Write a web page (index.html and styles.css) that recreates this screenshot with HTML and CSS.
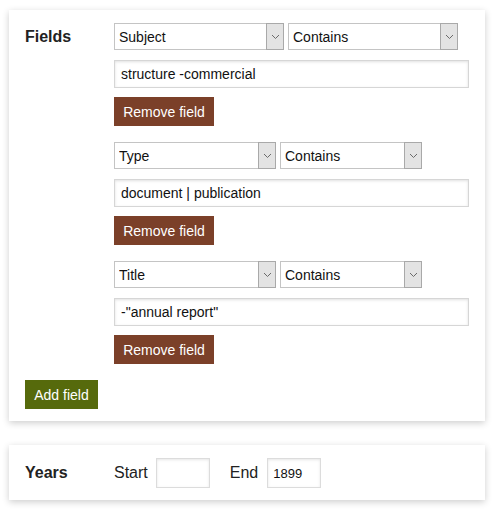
FILE: index.html
```html
<!DOCTYPE html>
<html>
<head>
<meta charset="utf-8">
<link rel="stylesheet" href="styles.css">
</head>
<body>
<div class="page">
  <section class="card fields-card">
    <div class="label">Fields</div>
    <div class="field-list">
      <div class="field">
        <div class="select-row">
          <span class="sel sel-wide"><select><option>Subject</option></select><span class="arrow"><svg width="9" height="6" viewBox="0 0 9 6"><path d="M1 1 L4.5 4.5 L8 1" fill="none" stroke="#6a6a6a" stroke-width="1"/></svg></span></span>
          <span class="sel sel-wide"><select><option>Contains</option></select><span class="arrow"><svg width="9" height="6" viewBox="0 0 9 6"><path d="M1 1 L4.5 4.5 L8 1" fill="none" stroke="#6a6a6a" stroke-width="1"/></svg></span></span>
        </div>
        <input class="text" type="text" value="structure -commercial">
        <button class="btn remove">Remove field</button>
      </div>
      <div class="field">
        <div class="select-row">
          <span class="sel sel-a"><select><option>Type</option></select><span class="arrow"><svg width="9" height="6" viewBox="0 0 9 6"><path d="M1 1 L4.5 4.5 L8 1" fill="none" stroke="#6a6a6a" stroke-width="1"/></svg></span></span>
          <span class="sel sel-b"><select><option>Contains</option></select><span class="arrow"><svg width="9" height="6" viewBox="0 0 9 6"><path d="M1 1 L4.5 4.5 L8 1" fill="none" stroke="#6a6a6a" stroke-width="1"/></svg></span></span>
        </div>
        <input class="text" type="text" value="document | publication">
        <button class="btn remove">Remove field</button>
      </div>
      <div class="field">
        <div class="select-row">
          <span class="sel sel-a"><select><option>Title</option></select><span class="arrow"><svg width="9" height="6" viewBox="0 0 9 6"><path d="M1 1 L4.5 4.5 L8 1" fill="none" stroke="#6a6a6a" stroke-width="1"/></svg></span></span>
          <span class="sel sel-b"><select><option>Contains</option></select><span class="arrow"><svg width="9" height="6" viewBox="0 0 9 6"><path d="M1 1 L4.5 4.5 L8 1" fill="none" stroke="#6a6a6a" stroke-width="1"/></svg></span></span>
        </div>
        <input class="text" type="text" value="-&quot;annual report&quot;">
        <button class="btn remove">Remove field</button>
      </div>
    </div>
    <div class="add-row"><button class="btn add">Add field</button></div>
  </section>

  <section class="card years-card">
    <div class="label">Years</div>
    <div class="years">
      <span class="yl">Start</span>
      <input class="year" type="text" value="">
      <span class="yl end">End</span>
      <input class="year" type="text" value="1899">
    </div>
  </section>
</div>
</body>
</html>
```

FILE: styles.css
```css
* { box-sizing: border-box; }
html, body { margin: 0; padding: 0; background: #fff; }
body {
  font-family: "Liberation Sans", Arial, sans-serif;
  font-size: 14px;
  color: #222;
}
.page {
  padding: 10px 13px 13px 9px;
  display: flex;
  flex-direction: column;
  gap: 24px;
}
.card {
  background: #fff;
  box-shadow: 0 2px 7px rgba(0, 0, 0, 0.2);
  display: grid;
  grid-template-columns: 89px 1fr;
  padding: 13px 16px 12px 16px;
}
.label {
  font-weight: bold;
  font-size: 16px;
  line-height: 27px;
  color: #222;
}
.field-list {
  display: flex;
  flex-direction: column;
  gap: 16px;
}
.field {
  display: flex;
  flex-direction: column;
  align-items: flex-start;
}
.select-row {
  display: flex;
  gap: 4px;
}
.sel {
  position: relative;
  display: block;
  height: 27px;
}
.sel-wide { width: 170px; }
.sel-a { width: 162px; }
.sel-b { width: 142px; }
.sel select {
  appearance: none;
  -webkit-appearance: none;
  width: 100%;
  height: 100%;
  border: 1px solid #c4c4c4;
  background: #fff;
  font-family: "Liberation Sans", Arial, sans-serif;
  font-size: 14px;
  color: #111;
  padding: 0 0 0 4px;
  border-radius: 0;
  margin: 0;
}
.arrow {
  position: absolute;
  right: 0;
  top: 0;
  bottom: 0;
  width: 18px;
  background: #e3e3e3;
  border: 1px solid #a9a9a9;
  display: flex;
  align-items: center;
  justify-content: center;
  pointer-events: none;
}
.text {
  margin-top: 10px;
  width: 355px;
  height: 28px;
  border: 1px solid #d6d6d6;
  box-shadow: inset 0 1px 3px rgba(0, 0, 0, 0.12);
  padding: 0 6px;
  font-family: "Liberation Sans", Arial, sans-serif;
  font-size: 14px;
  color: #111;
  background: #fff;
}
.btn {
  border: none;
  color: #fff;
  font-family: "Liberation Sans", Arial, sans-serif;
  font-size: 14px;
  height: 29px;
  padding: 0 9px;
  margin: 0;
  cursor: pointer;
}
.remove {
  margin-top: 9px;
  width: 100px;
  background: #7b4029;
}
.add-row {
  grid-column: 1 / -1;
  margin-top: 16px;
}
.add {
  width: 73px;
  background: #566a0c;
  padding: 0;
}
.years-card {
  padding-top: 13px;
  padding-bottom: 12px;
}
.years-card .label { line-height: 30px; }
.years {
  display: flex;
  align-items: center;
  height: 30px;
}
.yl {
  font-size: 16px;
  color: #222;
}
.year {
  width: 54px;
  height: 30px;
  margin-left: 8px;
  border: 1px solid #dcdcdc;
  box-shadow: inset 0 1px 3px rgba(0, 0, 0, 0.1);
  font-family: "Liberation Sans", Arial, sans-serif;
  font-size: 13px;
  padding: 0 5px;
  color: #111;
}
.end { margin-left: 20px; }
.end + .year { margin-left: 9px; }
```
